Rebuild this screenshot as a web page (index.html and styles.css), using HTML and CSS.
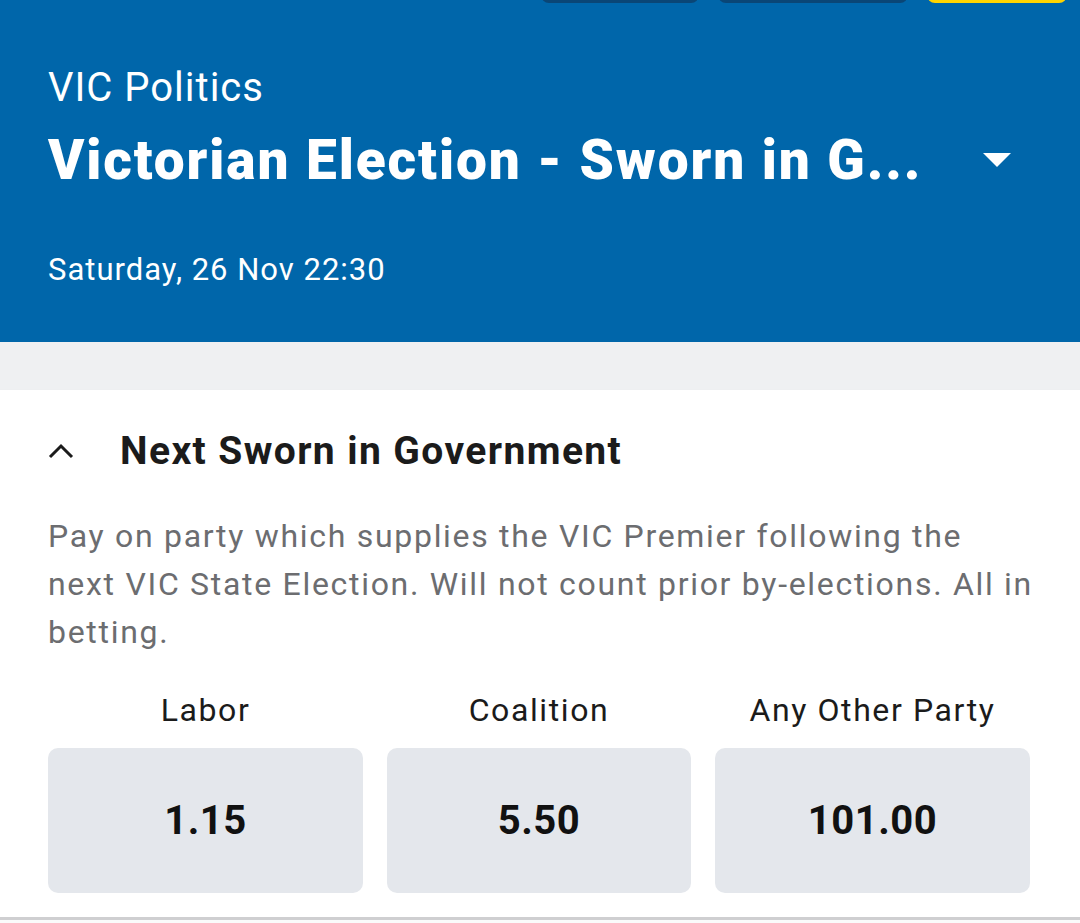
FILE: index.html
```html
<!DOCTYPE html>
<html lang="en">
<head>
    <meta charset="UTF-8">
    <meta name="viewport" content="width=device-width, initial-scale=1.0">
    <title>VIC Politics - Victorian Election</title>
    <link rel="stylesheet" href="styles.css">
</head>
<body>

<div class="event-header">
    <div class="top-tabs">
        <div class="top-tab"></div>
        <div class="top-tab wide"></div>
        <div class="top-tab yellow"></div>
    </div>
    <div class="competition">VIC Politics</div>
    <div class="event-title-row">
        <div class="event-title">Victorian Election - Sworn in G...</div>
        <svg class="dropdown-caret" width="28" height="14" viewBox="0 0 28 14">
            <path d="M0 0 H28 L14 14 Z" fill="#fff"/>
        </svg>
    </div>
    <div class="event-date">Saturday, 26 Nov 22:30</div>
</div>

<div class="spacer"></div>

<div class="market">
    <div class="market-head">
        <svg class="chevron" width="26" height="16" viewBox="0 0 26 16">
            <path d="M2 14 L13 3 L24 14" fill="none" stroke="#1b1b1b" stroke-width="3"/>
        </svg>
        <div class="market-name">Next Sworn in Government</div>
    </div>
    <p class="market-desc">Pay on party which supplies the VIC Premier following the next VIC State Election. Will not count prior by-elections. All in betting.</p>
    <div class="outcomes">
        <div class="outcome">
            <div class="outcome-name">Labor</div>
            <button class="price">1.15</button>
        </div>
        <div class="outcome">
            <div class="outcome-name">Coalition</div>
            <button class="price">5.50</button>
        </div>
        <div class="outcome">
            <div class="outcome-name">Any Other Party</div>
            <button class="price">101.00</button>
        </div>
    </div>
</div>

</body>
</html>
```

FILE: styles.css
```css
body {
    margin: 0;
    background-color: #fafafa;
    font-family: Roboto, "Noto Sans", Arial, sans-serif;
    overflow: hidden;
}
.event-header {
    background-color: #0066aa;
    color: #fff;
    height: 342px;
    box-sizing: border-box;
    padding: 0 48px;
    position: relative;
}
.top-tabs {
    position: absolute;
    top: -40px;
    left: 541px;
    display: flex;
    gap: 19px;
}
.top-tab {
    width: 158px;
    height: 43px;
    background-color: #0a4676;
    border-radius: 8px;
}
.top-tab.wide {
    width: 190px;
}
.top-tab.yellow {
    width: 140px;
    background-color: #ffd400;
}
.competition {
    padding-top: 64px;
    font-size: 40px;
    line-height: 48px;
    letter-spacing: 1px;
}
.event-title-row {
    display: flex;
    align-items: center;
    justify-content: space-between;
    margin-top: 12px;
}
.event-title {
    font-weight: 900;
    font-size: 55px;
    line-height: 72px;
    letter-spacing: 1.9px;
    white-space: nowrap;
}
.dropdown-caret {
    margin-right: 21px;
}
.event-date {
    margin-top: 54px;
    font-size: 31px;
    line-height: 40px;
    letter-spacing: 1px;
}
.spacer {
    height: 48px;
    background-color: #eff0f2;
}
.market {
    background-color: #fff;
    padding: 0 48px 24px;
    border-bottom: 3px solid #cfcfd1;
    box-shadow: 0 2px 3px rgba(0, 0, 0, 0.12);
}
.market-head {
    display: flex;
    align-items: center;
    height: 122px;
}
.chevron {
    margin-right: 46px;
}
.market-name {
    font-size: 39px;
    font-weight: 700;
    letter-spacing: 1.4px;
    color: #1b1b1b;
}
.market-desc {
    margin: 0 -5px 0 0;
    font-size: 32px;
    line-height: 48px;
    letter-spacing: 1.7px;
    color: #6c6d70;
}
.outcomes {
    display: grid;
    grid-template-columns: 315px 304px 315px;
    gap: 24px;
    margin-top: 30px;
}
.outcome {
    display: flex;
    flex-direction: column;
    align-items: center;
}
.outcome-name {
    font-size: 32px;
    line-height: 48px;
    letter-spacing: 1.6px;
    color: #1b1b1b;
    margin-bottom: 14px;
}
.price {
    width: 100%;
    height: 145px;
    border: none;
    border-radius: 10px;
    background-color: #e4e7ec;
    font-family: Roboto, "Noto Sans", Arial, sans-serif;
    font-size: 40px;
    font-weight: 700;
    letter-spacing: 0.5px;
    color: #111;
}
```
